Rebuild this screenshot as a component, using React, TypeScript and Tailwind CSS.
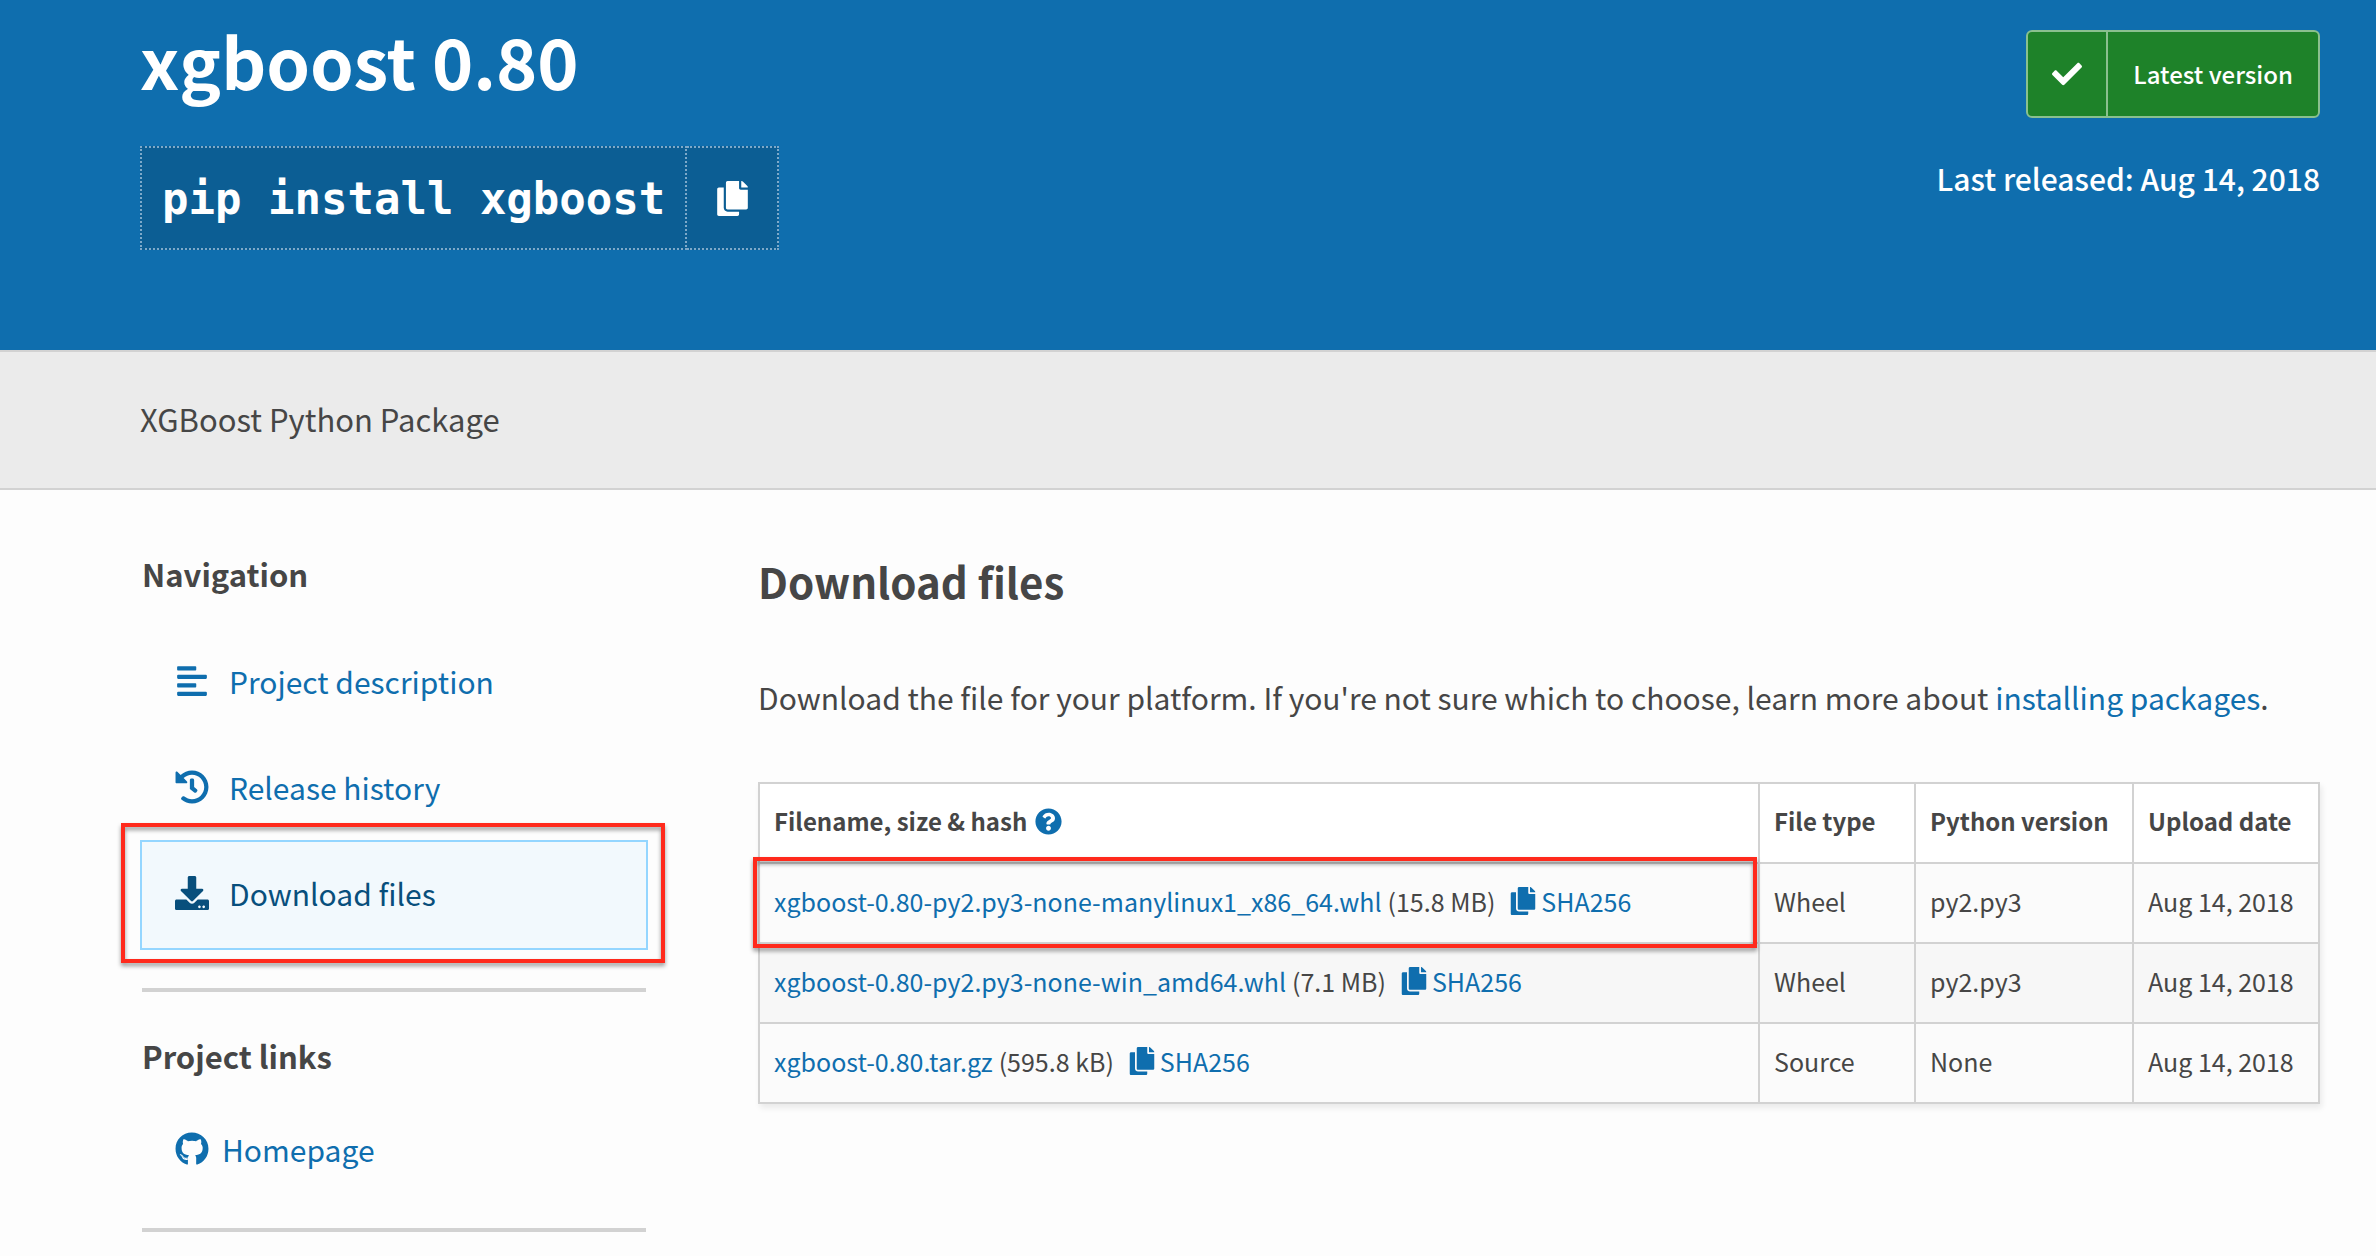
import type { ReactNode } from "react";
import {
  FaAlignLeft,
  FaCheck,
  FaCopy,
  FaDownload,
  FaGithub,
  FaHistory,
  FaQuestionCircle,
} from "react-icons/fa";

type FileRow = {
  name: string;
  size: string;
  type: string;
  python: string;
  date: string;
  marked?: boolean;
};

const files: FileRow[] = [
  {
    name: "xgboost-0.80-py2.py3-none-manylinux1_x86_64.whl",
    size: "(15.8 MB)",
    type: "Wheel",
    python: "py2.py3",
    date: "Aug 14, 2018",
    marked: true,
  },
  {
    name: "xgboost-0.80-py2.py3-none-win_amd64.whl",
    size: "(7.1 MB)",
    type: "Wheel",
    python: "py2.py3",
    date: "Aug 14, 2018",
  },
  {
    name: "xgboost-0.80.tar.gz",
    size: "(595.8 kB)",
    type: "Source",
    python: "None",
    date: "Aug 14, 2018",
  },
];

const cell = "border-2 border-[#d2d2d2] pt-4 pb-5 pl-[14px] leading-[42px] text-left whitespace-nowrap";

function Header() {
  return (
    <header className="flex items-start justify-between bg-[#0f6eae] pr-14 pb-[100px] pl-[140px] text-white">
      <div className="pt-6">
        <h1 className="text-[70px] leading-[72px] font-bold">xgboost 0.80</h1>
        <div className="mt-[50px] flex h-[104px] items-stretch">
          <code className="flex items-center border-2 border-dotted border-[#7ea9c9] bg-[#0c5e94] px-5 pt-[2px] font-['DejaVu_Sans_Mono',monospace] text-[44px] leading-[56px] font-bold whitespace-pre">
            pip install xgboost
          </code>
          <button
            type="button"
            aria-label="Copy pip command"
            className="flex w-[92px] items-center justify-center border-2 border-l-0 border-dotted border-[#7ea9c9] bg-[#0c5e94]"
          >
            <FaCopy className="size-[35px]" />
          </button>
        </div>
      </div>
      <div className="flex flex-col items-end pt-[30px]">
        <a
          href="#latest"
          className="flex h-[88px] items-stretch rounded-md border-2 border-[#8ac08e] bg-[#1e8229] text-[24px] leading-10 font-medium"
        >
          <span className="flex w-20 items-center justify-center border-r-2 border-[#8ac08e]">
            <FaCheck className="size-[30px]" />
          </span>
          <span className="flex items-center px-[25px]">Latest version</span>
        </a>
        <p className="mt-9 text-[30px] leading-[48px] font-medium">Last released: Aug 14, 2018</p>
      </div>
    </header>
  );
}

function Marker({ className }: { className: string }) {
  return (
    <span
      aria-hidden="true"
      className={
        "pointer-events-none absolute z-10 border-4 border-[#ff2a1c] drop-shadow-[0_3px_2px_rgba(0,0,0,0.4)] " +
        className
      }
    />
  );
}

function NavItem({
  icon,
  label,
  href,
  active,
  gap,
}: {
  icon: ReactNode;
  label: string;
  href: string;
  active?: boolean;
  gap: string;
}) {
  return (
    <li className="relative">
      <a
        href={href}
        aria-current={active ? "page" : undefined}
        className={
          "flex items-center text-[30px] leading-[48px] " +
          gap +
          (active
            ? " -mx-[2px] -my-[2px] h-[110px] border-2 border-[#94d6ff] bg-[#f2f9fd] pb-1 pl-[33px] text-[#084f7c]"
            : " h-[106px] pb-1 pl-[33px] text-[#0f6eae]")
        }
      >
        {icon}
        {label}
      </a>
      {active && <Marker className="-top-[17px] -right-[19px] -bottom-[13px] -left-[21px]" />}
    </li>
  );
}

function Sidebar() {
  const title = "text-[31px] leading-[48px] font-bold";
  return (
    <aside className="w-[504px] shrink-0 pt-[60px]">
      <h2 className={title}>Navigation</h2>
      <ul className="mt-8">
        <NavItem gap="gap-5" href="#description" icon={<FaAlignLeft className="size-[34px]" />} label="Project description" />
        <NavItem gap="gap-5" href="#history" icon={<FaHistory className="size-[34px]" />} label="Release history" />
        <NavItem gap="gap-5" href="#files" active icon={<FaDownload className="size-[34px]" />} label="Download files" />
      </ul>
      <hr className="mt-10 border-0 border-t-4 border-[#d2d2d2]" />
      <h2 className={"mt-10 " + title}>Project links</h2>
      <ul className="mt-[18px]">
        <NavItem gap="gap-[13px]" href="#homepage" icon={<FaGithub className="size-[34px]" />} label="Homepage" />
      </ul>
      <hr className="mt-6 border-0 border-t-4 border-[#d2d2d2]" />
    </aside>
  );
}

function FilesTable() {
  return (
    <table className="mt-[61px] w-full border-collapse text-[25px] shadow-[2px_4px_6px_rgba(0,0,0,0.08)]">
      <thead className="text-[24px]">
        <tr className="bg-white">
          <th className={cell}>
            <span className="flex items-center gap-2">
              Filename, size &amp; hash
              <a href="#hash-help" aria-label="About hashes" className="text-[#0f6eae]">
                <FaQuestionCircle className="size-[27px]" />
              </a>
            </span>
          </th>
          <th className={cell + " w-[156px]"}>File type</th>
          <th className={cell + " w-[218px]"}>Python version</th>
          <th className={cell + " w-[186px]"}>Upload date</th>
        </tr>
      </thead>
      <tbody>
        {files.map((file) => (
          <tr key={file.name} className="bg-[#fbfbfb] even:bg-[#f7f7f7]">
            <td className={cell + " relative"}>
              <div className="flex items-center">
                <a href="#download" className="text-[#0f6eae]">
                  {file.name}
                </a>
                <span className="ml-[6px]">{file.size}</span>
                <button type="button" className="ml-[14px] flex items-center gap-1 text-[#0f6eae]">
                  <FaCopy className="size-7" />
                  SHA256
                </button>
              </div>
              {file.marked && <Marker className="-top-[7px] right-px -bottom-[6px] -left-[7px]" />}
            </td>
            <td className={cell}>{file.type}</td>
            <td className={cell}>{file.python}</td>
            <td className={cell}>{file.date}</td>
          </tr>
        ))}
      </tbody>
    </table>
  );
}

export default function App() {
  return (
    <div className="min-h-screen bg-[#fdfdfd] font-['Noto_Sans_CJK_SC','Open_Sans',sans-serif] text-[#464646]">
      <Header />
      <div className="border-y-2 border-[#d2d2d2] bg-[#ebebeb] pt-[43px] pb-[45px] pl-[140px]">
        <p className="text-[31px] leading-[48px]">XGBoost Python Package</p>
      </div>
      <div className="flex items-start gap-28 pr-14 pl-[142px]">
        <Sidebar />
        <main className="min-w-0 grow pt-[63px]">
          <h2 className="text-[42px] leading-[56px] font-bold">Download files</h2>
          <p className="mt-16 text-[30px] leading-[48px]">
            Download the file for your platform. If you're not sure which to choose, learn more about{" "}
            <a href="#installing" className="text-[#0f6eae]">
              installing packages
            </a>
            .
          </p>
          <FilesTable />
        </main>
      </div>
    </div>
  );
}
